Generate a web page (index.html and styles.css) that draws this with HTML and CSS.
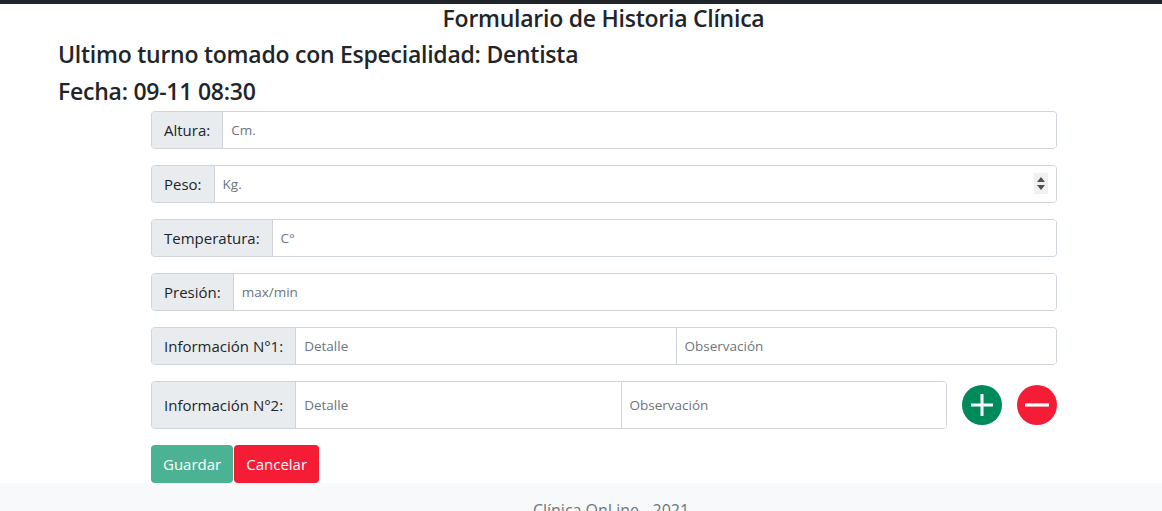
FILE: index.html
```html
<!DOCTYPE html>
<html lang="es">
<head>
<meta charset="utf-8">
<title>Formulario de Historia Clínica</title>
<link rel="stylesheet" href="styles.css">
</head>
<body>
<div class="topbar"></div>
<h4 class="title">Formulario de Historia Clínica</h4>
<div class="info">
  <h4 class="info-line">Ultimo turno tomado con Especialidad: Dentista</h4>
  <h4 class="info-line second">Fecha: 09-11 08:30</h4>
</div>
<form class="form">
  <div class="group"><span class="addon">Altura:</span><input class="ctl" placeholder="Cm."></div>
  <div class="group"><span class="addon">Peso:</span><span class="ctl-wrap"><input class="ctl" placeholder="Kg."><span class="spin"><svg width="14" height="21" viewBox="0 0 14 21"><path d="M3 9 L7 4 L11 9 Z" fill="#505050"/><path d="M3 12 L7 17 L11 12 Z" fill="#505050"/></svg></span></span></div>
  <div class="group"><span class="addon">Temperatura:</span><input class="ctl" placeholder="C°"></div>
  <div class="group"><span class="addon">Presión:</span><input class="ctl" placeholder="max/min"></div>
  <div class="group"><span class="addon">Información N°1:</span><input class="ctl" placeholder="Detalle"><input class="ctl" placeholder="Observación"></div>
  <div class="extra">
    <div class="group lg"><span class="addon">Información N°2:</span><input class="ctl" placeholder="Detalle"><input class="ctl" placeholder="Observación"></div>
    <button type="button" class="circle add"><svg width="40" height="40" viewBox="0 0 40 40"><path d="M20 9 V31 M9 20 H31" stroke="#fff" stroke-width="3"/></svg></button>
    <button type="button" class="circle remove"><svg width="40" height="40" viewBox="0 0 40 40"><path d="M8 20 H32" stroke="#fff" stroke-width="3.2"/></svg></button>
  </div>
  <div class="actions"><button type="button" class="btn save">Guardar</button><button type="button" class="btn cancel">Cancelar</button></div>
</form>
<footer class="footer">Clínica OnLine - 2021</footer>
</body>
</html>
```
FILE: styles.css
```css
* { box-sizing: border-box; }
html, body { margin: 0; padding: 0; }
body {
  font-family: "Open Sans", "Noto Sans", "Liberation Sans", sans-serif;
  color: #212529;
  background: #fff;
  height: 511px;
  overflow: hidden;
}
.topbar { height: 4px; background: #212529; }
h4 {
  margin: 0;
  font-size: 23px;
  line-height: 29px;
  font-weight: 600;
  letter-spacing: -0.25px;
}
.title { text-align: center; padding-left: 45px; }
.info { padding-left: 58px; margin-top: 7px; }
.info-line.second { margin-top: 8px; }
.form { margin: 5px 0 0 151px; width: 906px; }
.group {
  display: flex;
  height: 38px;
  margin-bottom: 16px;
  border: 1px solid #ced4da;
  border-radius: 4px;
  overflow: hidden;
}
.group.lg { height: 48px; flex: 1; margin-bottom: 0; }
.addon {
  display: flex;
  align-items: center;
  padding: 0 12px;
  background: #e9ecef;
  border-right: 1px solid #ced4da;
  font-size: 15px;
  white-space: nowrap;
}
.ctl {
  flex: 1;
  min-width: 0;
  border: 0;
  padding: 0 8px;
  font: inherit;
  font-size: 13.5px;
  color: #212529;
  background: #fff;
  outline: none;
}
.ctl + .ctl { border-left: 1px solid #ced4da; }
.ctl::placeholder { color: #6c757d; }
.ctl-wrap { flex: 1; display: flex; position: relative; }
.spin {
  position: absolute;
  right: 8px;
  top: 7px;
  width: 14px;
  height: 21px;
  background: #f0f0f0;
  display: flex;
}
.extra { display: flex; align-items: center; margin-bottom: 16px; }
.circle {
  width: 40px;
  height: 40px;
  border-radius: 50%;
  border: 0;
  padding: 0;
  margin-left: 15px;
  display: flex;
  align-items: center;
  justify-content: center;
}
.circle.add { background: #008a5b; }
.circle.remove { background: #f51c35; }
.actions { display: flex; gap: 1px; }
.btn {
  height: 38px;
  padding: 0 12px;
  border: 0;
  border-radius: 4px;
  color: #fff;
  font: inherit;
  font-size: 15px;
}
.btn.save { background: #4bb393; }
.btn.cancel { background: #f51c35; }
.footer {
  background: #f8f9fa;
  color: #6c757d;
  text-align: center;
  padding: 16px 0 20px 60px;
  font-size: 16px;
}
```
